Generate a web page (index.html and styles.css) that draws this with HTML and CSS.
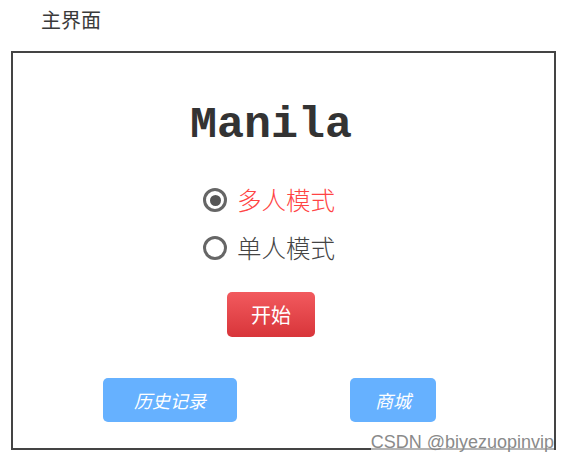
FILE: index.html
```html
<!DOCTYPE html>
<html lang="zh-CN">
<head>
<meta charset="utf-8">
<title>主界面</title>
<link rel="stylesheet" href="styles.css">
</head>
<body>
  <div class="page-title">主界面</div>
  <main class="frame">
    <h1 class="logo">Manila</h1>
    <div class="modes">
      <label class="mode mode-active">
        <span class="radio checked"></span>
        <span class="mode-text">多人模式</span>
      </label>
      <label class="mode">
        <span class="radio"></span>
        <span class="mode-text">单人模式</span>
      </label>
    </div>
    <button class="btn btn-start">开始</button>
    <div class="links">
      <button class="btn btn-link btn-history">历史记录</button>
      <button class="btn btn-link btn-shop">商城</button>
    </div>
    <span class="watermark">CSDN @biyezuopinvip</span>
  </main>
</body>
</html>
```
FILE: styles.css
```css
* { box-sizing: border-box; }

html, body {
  margin: 0;
  padding: 0;
  background: #fff;
  width: 568px;
  height: 461px;
  overflow: hidden;
  font-family: "Noto Sans CJK SC", "Noto Sans", sans-serif;
}

.page-title {
  padding: 6px 0 0 41px;
  height: 51px;
  font-size: 20px;
  line-height: 28px;
  color: #3a3a3a;
}

.frame {
  position: relative;
  margin-left: 11px;
  width: 545px;
  height: 399px;
  border: 2px solid #444;
  display: flex;
  flex-direction: column;
  align-items: center;
  padding-right: 25px;
}

.logo {
  margin: 48px 0 0 0;
  font-family: "Liberation Mono", "Courier New", monospace;
  font-weight: bold;
  font-size: 45px;
  line-height: 50px;
  color: #333;
}

.modes {
  margin-top: 32px;
  display: flex;
  flex-direction: column;
  gap: 14px;
  margin-right: 4px;
}

.mode {
  display: flex;
  align-items: center;
  gap: 10px;
  height: 34px;
}

.radio {
  width: 24px;
  height: 24px;
  border: 3px solid #666;
  border-radius: 50%;
  display: flex;
  align-items: center;
  justify-content: center;
}

.radio.checked::after {
  content: "";
  width: 11px;
  height: 11px;
  border-radius: 50%;
  background: #555;
}

.mode-text {
  font-size: 24.5px;
  font-weight: 300;
  color: #444;
  line-height: 34px;
}

.mode-active .mode-text { color: #f44; }

.btn {
  border: none;
  font-family: "Noto Sans CJK SC", "Noto Sans", sans-serif;
  color: #fff;
  cursor: pointer;
}

.btn-start {
  margin-top: 27px;
  width: 88px;
  height: 45px;
  border-radius: 5px;
  font-size: 20px;
  background: linear-gradient(#f25a5e, #d8353a);
}

.links {
  align-self: stretch;
  display: flex;
  padding-left: 90px;
  margin-top: 41px;
}

.btn-link {
  height: 44px;
  border-radius: 5px;
  background: #66b1ff;
  font-size: 18px;
  font-style: italic;
}

.btn-history { width: 134px; }
.btn-shop { width: 86px; margin-left: 113px; }

.watermark {
  position: absolute;
  right: 0;
  bottom: -4px;
  font-family: "Liberation Sans", Arial, sans-serif;
  font-size: 18px;
  line-height: 20px;
  color: #8a8a8a;
  background: rgba(255,255,255,0.6);
}
```
